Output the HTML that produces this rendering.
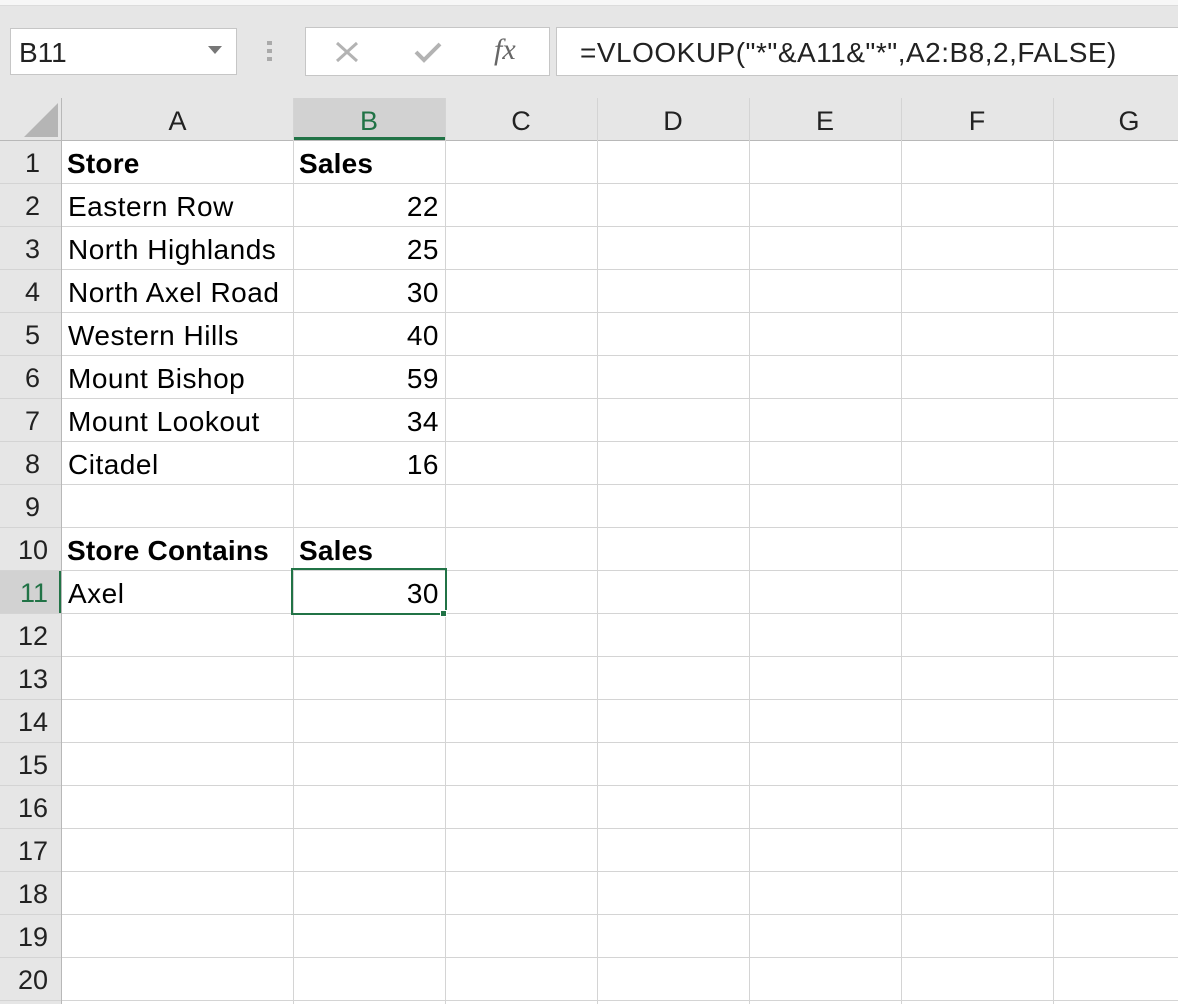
<!DOCTYPE html>
<html><head><meta charset="utf-8"><style>
*{margin:0;padding:0;box-sizing:border-box}
body{width:1178px;height:1004px;background:#e6e6e6;position:relative;overflow:hidden;font-family:"Liberation Sans",sans-serif;color:#000}
.a{position:absolute}
.top{left:0;top:0;width:1178px;height:6px;background:#f7f7f7;border-bottom:1px solid #dcdcdc}
.grid{left:62px;top:141px;width:1116px;height:863px;background:#fff}
.hl{position:absolute;height:1px;background:#d4d4d4;left:0;width:1178px}
.vl{position:absolute;width:1px;background:#d4d4d4;top:98px;height:906px}
.ch{position:absolute;top:98px;height:42px;font-size:27px;text-align:center;line-height:46px;color:#222}
.rh{position:absolute;left:0;width:61px;height:43px;font-size:27px;text-align:right;padding-right:21px;line-height:47px;color:#222}
.c{position:absolute;height:43px;font-size:28px;letter-spacing:0.5px;line-height:47px;white-space:nowrap}
.b{font-weight:bold;letter-spacing:0.2px}
.r{text-align:right}
</style></head><body>
<div class="a top"></div>
<div class="a" style="left:10px;top:28px;width:227px;height:47px;background:#fff;border:1px solid #c6c6c6;font-size:28px;line-height:47px;padding-left:8px;color:#222">B11</div>
<svg class="a" style="left:207px;top:45px" width="16" height="10"><path d="M1 1L15 1L8 9Z" fill="#777"/></svg>
<div class="a" style="left:267px;top:41px;width:5px;height:4px;background:#aaa"></div>
<div class="a" style="left:267px;top:49px;width:5px;height:4px;background:#aaa"></div>
<div class="a" style="left:267px;top:57px;width:5px;height:4px;background:#aaa"></div>
<div class="a" style="left:305px;top:27px;width:245px;height:49px;background:#fff;border:1px solid #c6c6c6"></div>
<svg class="a" style="left:334px;top:40px" width="26" height="24"><path d="M3 3L23 21M23 3L3 21" stroke="#b3b3b3" stroke-width="3"/></svg>
<svg class="a" style="left:413px;top:40px" width="30" height="24"><path d="M3 12L11 20L27 4" stroke="#b3b3b3" stroke-width="4" fill="none"/></svg>
<div class="a" style="left:494px;top:33px;font-family:'Liberation Serif',serif;font-style:italic;font-size:30px;color:#666">fx</div>
<div class="a" style="left:556px;top:27px;width:630px;height:49px;background:#fff;border:1px solid #c6c6c6;font-size:28px;letter-spacing:0.5px;line-height:50px;padding-left:23px;color:#222">=VLOOKUP("*"&amp;A11&amp;"*",A2:B8,2,FALSE)</div>

<div class="a grid"></div>
<svg class="a" style="left:20px;top:100px" width="40" height="40"><path d="M4 37L38 37L38 3Z" fill="#b5b5b5"/></svg>
<div class="a" style="left:293px;top:98px;width:152px;height:42px;background:#d2d2d2"></div>
<div class="a" style="left:293px;top:137px;width:153px;height:3px;background:#217346"></div>
<div class="a" style="left:0;top:570px;width:61px;height:43px;background:#d2d2d2"></div>
<div class="a" style="left:59px;top:570px;width:3px;height:43px;background:#217346"></div>

<div class="hl" style="top:140px;background:#b8b8b8"></div>
<div class="hl" style="top:183px"></div><div class="hl" style="top:226px"></div><div class="hl" style="top:269px"></div><div class="hl" style="top:312px"></div><div class="hl" style="top:355px"></div><div class="hl" style="top:398px"></div><div class="hl" style="top:441px"></div><div class="hl" style="top:484px"></div><div class="hl" style="top:527px"></div><div class="hl" style="top:570px"></div><div class="hl" style="top:613px"></div><div class="hl" style="top:656px"></div><div class="hl" style="top:699px"></div><div class="hl" style="top:742px"></div><div class="hl" style="top:785px"></div><div class="hl" style="top:828px"></div><div class="hl" style="top:871px"></div><div class="hl" style="top:914px"></div><div class="hl" style="top:957px"></div><div class="hl" style="top:1000px"></div>
<div class="vl" style="left:61px;background:#b8b8b8"></div>
<div class="vl" style="left:293px"></div><div class="vl" style="left:445px"></div><div class="vl" style="left:597px"></div><div class="vl" style="left:749px"></div><div class="vl" style="left:901px"></div><div class="vl" style="left:1053px"></div>

<div class="ch" style="left:62px;width:231px">A</div>
<div class="ch" style="left:293px;width:152px;color:#217346">B</div>
<div class="ch" style="left:445px;width:152px">C</div>
<div class="ch" style="left:597px;width:152px">D</div>
<div class="ch" style="left:749px;width:152px">E</div>
<div class="ch" style="left:901px;width:152px">F</div>
<div class="ch" style="left:1053px;width:152px">G</div>

<div class="rh" style="top:140px">1</div><div class="rh" style="top:183px">2</div><div class="rh" style="top:226px">3</div><div class="rh" style="top:269px">4</div><div class="rh" style="top:312px">5</div><div class="rh" style="top:355px">6</div><div class="rh" style="top:398px">7</div><div class="rh" style="top:441px">8</div><div class="rh" style="top:484px">9</div><div class="rh" style="top:527px;padding-right:13px">10</div><div class="rh" style="top:570px;padding-right:13px;color:#217346">11</div><div class="rh" style="top:613px;padding-right:13px">12</div><div class="rh" style="top:656px;padding-right:13px">13</div><div class="rh" style="top:699px;padding-right:13px">14</div><div class="rh" style="top:742px;padding-right:13px">15</div><div class="rh" style="top:785px;padding-right:13px">16</div><div class="rh" style="top:828px;padding-right:13px">17</div><div class="rh" style="top:871px;padding-right:13px">18</div><div class="rh" style="top:914px;padding-right:13px">19</div><div class="rh" style="top:957px;padding-right:13px">20</div>

<div class="c b" style="left:67px;top:140px">Store</div><div class="c b" style="left:299px;top:140px">Sales</div>
<div class="c" style="left:68px;top:183px">Eastern Row</div><div class="c r" style="left:293px;width:146px;top:183px">22</div>
<div class="c" style="left:68px;top:226px">North Highlands</div><div class="c r" style="left:293px;width:146px;top:226px">25</div>
<div class="c" style="left:68px;top:269px">North Axel Road</div><div class="c r" style="left:293px;width:146px;top:269px">30</div>
<div class="c" style="left:68px;top:312px">Western Hills</div><div class="c r" style="left:293px;width:146px;top:312px">40</div>
<div class="c" style="left:68px;top:355px">Mount Bishop</div><div class="c r" style="left:293px;width:146px;top:355px">59</div>
<div class="c" style="left:68px;top:398px">Mount Lookout</div><div class="c r" style="left:293px;width:146px;top:398px">34</div>
<div class="c" style="left:68px;top:441px">Citadel</div><div class="c r" style="left:293px;width:146px;top:441px">16</div>
<div class="c b" style="left:67px;top:527px">Store Contains</div><div class="c b" style="left:299px;top:527px">Sales</div>
<div class="c" style="left:68px;top:570px">Axel</div><div class="c r" style="left:293px;width:146px;top:570px">30</div>

<div class="a" style="left:291px;top:568px;width:156px;height:47px;border:2px solid #217346"></div>
<div class="a" style="left:440px;top:610px;width:7px;height:7px;background:#217346;border:1px solid #fff"></div>
</body></html>
